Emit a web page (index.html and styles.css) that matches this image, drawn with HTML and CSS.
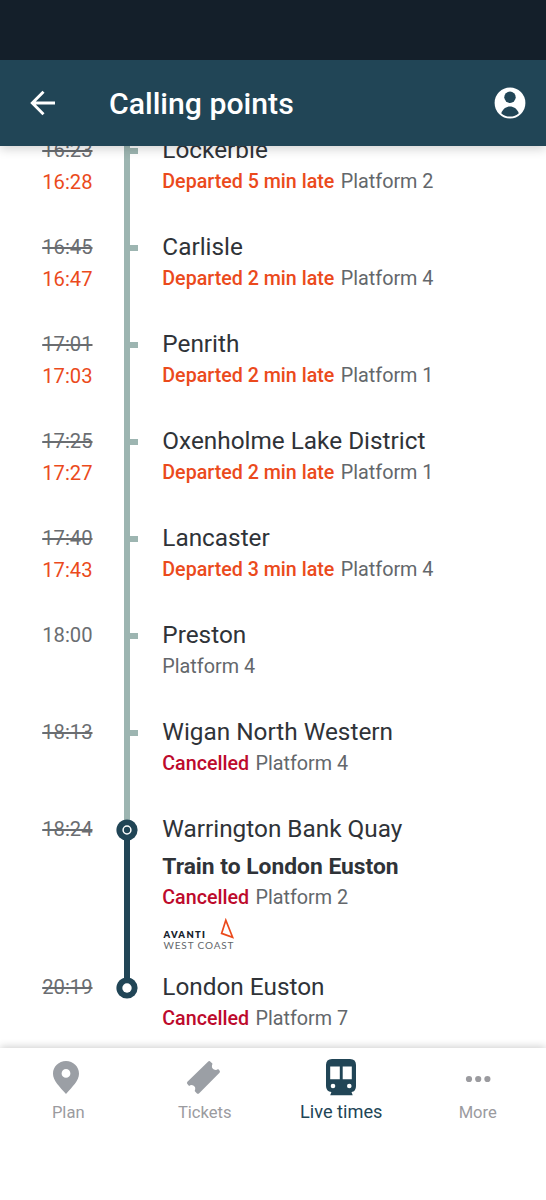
FILE: index.html
```html
<!DOCTYPE html>
<html lang="en">
<head>
    <meta charset="UTF-8">
    <meta name="viewport" content="width=device-width, initial-scale=1.0">
    <title>Calling points</title>
    <link rel="stylesheet" href="styles.css">
</head>
<body>

<div class="status-bar"></div>

<header class="header">
    <svg class="back" viewBox="0 0 26 26" fill="none" stroke="#fff" stroke-width="2.9">
        <path d="M25 13H2.5M13.5 1.8L2.3 13l11.2 11.2"/>
    </svg>
    <h1>Calling points</h1>
    <svg class="account" viewBox="0 0 32 32">
        <circle cx="16" cy="16" r="15.4" fill="#fff"/>
        <circle cx="16" cy="10.3" r="5.7" fill="#214556"/>
        <path d="M7.2 26.2C9.2 21.6 12.3 19.6 16 19.6s6.8 2 8.8 6.6C22.5 28.6 19.5 29.6 16 29.6s-6.5-1-8.8-3.4z" fill="#214556"/>
    </svg>
</header>

<main class="stops">
    <div class="stop">
        <div class="time"><s>16:23</s><span class="late">16:28</span></div>
        <div class="rail"></div>
        <div class="info">
            <h2>Lockerbie</h2>
            <p><b class="late">Departed 5 min late</b> Platform 2</p>
        </div>
    </div>
    <div class="stop">
        <div class="time"><s>16:45</s><span class="late">16:47</span></div>
        <div class="rail"></div>
        <div class="info">
            <h2>Carlisle</h2>
            <p><b class="late">Departed 2 min late</b> Platform 4</p>
        </div>
    </div>
    <div class="stop">
        <div class="time"><s>17:01</s><span class="late">17:03</span></div>
        <div class="rail"></div>
        <div class="info">
            <h2>Penrith</h2>
            <p><b class="late">Departed 2 min late</b> Platform 1</p>
        </div>
    </div>
    <div class="stop">
        <div class="time"><s>17:25</s><span class="late">17:27</span></div>
        <div class="rail"></div>
        <div class="info">
            <h2>Oxenholme Lake District</h2>
            <p><b class="late">Departed 2 min late</b> Platform 1</p>
        </div>
    </div>
    <div class="stop">
        <div class="time"><s>17:40</s><span class="late">17:43</span></div>
        <div class="rail"></div>
        <div class="info">
            <h2>Lancaster</h2>
            <p><b class="late">Departed 3 min late</b> Platform 4</p>
        </div>
    </div>
    <div class="stop">
        <div class="time"><span>18:00</span></div>
        <div class="rail"></div>
        <div class="info">
            <h2>Preston</h2>
            <p>Platform 4</p>
        </div>
    </div>
    <div class="stop">
        <div class="time"><s>18:13</s></div>
        <div class="rail"></div>
        <div class="info">
            <h2>Wigan North Western</h2>
            <p><b class="cancelled">Cancelled</b> Platform 4</p>
        </div>
    </div>
    <div class="stop origin">
        <div class="time"><s>18:24</s></div>
        <div class="rail">
            <svg class="marker" viewBox="0 0 22 22">
                <circle cx="11" cy="11" r="10.6" fill="#214556"/>
                <circle cx="11" cy="11" r="3.9" fill="none" stroke="#fff" stroke-width="1.5"/>
            </svg>
        </div>
        <div class="info">
            <h2>Warrington Bank Quay</h2>
            <h3>Train to London Euston</h3>
            <p><b class="cancelled">Cancelled</b> Platform 2</p>
            <svg class="operator" viewBox="0 0 72 32">
                <text class="avanti" x="0.5" y="20.2" textLength="41.5">AVANTI</text>
                <text class="west-coast" x="0.5" y="30.6" textLength="70">WEST COAST</text>
                <path d="M62.8 2.2L58.6 15.4l11 3.9z" fill="none" stroke="#eb4a1c" stroke-width="1.7"/>
            </svg>
        </div>
    </div>
    <div class="stop last">
        <div class="time"><s>20:19</s></div>
        <div class="rail">
            <svg class="marker" viewBox="0 0 22 22">
                <circle cx="11" cy="11" r="10.6" fill="#214556"/>
                <circle cx="11" cy="11" r="4.7" fill="#fff"/>
            </svg>
        </div>
        <div class="info">
            <h2>London Euston</h2>
            <p><b class="cancelled">Cancelled</b> Platform 7</p>
        </div>
    </div>
</main>

<nav class="tabs">
    <a class="tab">
        <svg viewBox="0 0 40 40" fill="#9b9fa5">
            <path fill-rule="evenodd" d="M18 4C10.8 4 5 9.6 5 16.7 5 23.5 11.5 29.5 18 37c6.5-7.5 13-13.5 13-20.3C31 9.6 25.2 4 18 4zm0 8a4.4 4.4 0 1 1 0 8.8 4.4 4.4 0 0 1 0-8.8z"/>
        </svg>
        <span>Plan</span>
    </a>
    <a class="tab">
        <svg viewBox="3.5 0 40 40" fill="#9b9fa5">
            <path d="M26.5 4.700q1.300-1.200 2.500 0l2 2q-1.600 4 1 5.500t4.600-.3l1.400 1.600q1 1.200 0 2.300L17.700 36.200q-1.300 1.200-2.500 0l-2-2.100q1.500-3.800-1-5.300t-4.600.2l-1.700-1.900q-1-1.200 0-2.300z"/>
        </svg>
        <span>Tickets</span>
    </a>
    <a class="tab active">
        <svg viewBox="0 0 40 40">
            <path fill="#214556" d="M11 2h18q6 0 6 6v21q0 5.500-4.500 6l1.200 3.300h-22.500l1.200-3.300Q5 34.500 5 29V8q0-6 6-6z"/>
            <path fill="#fff" d="M9.200 9.500h9.600v12.800H9.200zM21.700 9.500h9.100v12.800h-9.100z"/>
            <circle cx="12" cy="29" r="2.3" fill="#fff"/>
            <circle cx="28.3" cy="29" r="2.3" fill="#fff"/>
        </svg>
        <span>Live times</span>
    </a>
    <a class="tab">
        <svg viewBox="0 0 40 40" fill="#9b9b9f">
            <circle cx="11" cy="22" r="3.1"/>
            <circle cx="20.2" cy="22" r="3.1"/>
            <circle cx="29.4" cy="22" r="3.1"/>
        </svg>
        <span>More</span>
    </a>
</nav>

</body>
</html>
```
FILE: styles.css
```css
* {
    box-sizing: border-box;
}

body {
    margin: 0;
    height: 1200px;
    display: flex;
    flex-direction: column;
    overflow: hidden;
    font-family: Roboto, sans-serif;
    background: #fff;
    color: #2f3338;
}

h1, h2, h3, p {
    margin: 0;
}

.status-bar {
    flex: none;
    height: 60px;
    background: #141f2a;
    z-index: 2;
}

.header {
    flex: none;
    height: 86px;
    display: flex;
    align-items: center;
    padding: 0 20px 0 30px;
    background: #214556;
    color: #fff;
    box-shadow: 0 3px 10px rgba(0, 0, 0, 0.18);
    z-index: 1;
}

.header h1 {
    flex: 1;
    margin-left: 53px;
    font-size: 30.2px;
    font-weight: 500;
}

.back {
    width: 26px;
    height: 26px;
}

.account {
    width: 32px;
    height: 32px;
}

.stops {
    flex: none;
    height: 902px;
    overflow: hidden;
}

.stop {
    display: flex;
    height: 97px;
}

.stop:first-child {
    margin-top: -12px;
}

.stop.origin {
    height: 158px;
}

.time {
    width: 124px;
    padding-right: 31.5px;
    text-align: right;
    font-size: 20.2px;
    font-weight: 450;
    color: #6a6d71;
}

.time s, .time span {
    display: block;
    line-height: 32px;
}

.time s {
    text-decoration-thickness: 1.5px;
}

.time .late, .late {
    color: #eb4a1c;
}

.cancelled {
    color: #bd0a2c;
}

/* the line runs past the row, the tick sits level with the station name */
.rail {
    width: 14px;
    background:
        linear-gradient(#9db5b1, #9db5b1) 0 14px / 14px 6px no-repeat,
        linear-gradient(#9db5b1, #9db5b1) 0 0 / 6px 100% no-repeat;
}

.origin .rail {
    background:
        linear-gradient(#9db5b1, #9db5b1) 0 0 / 6px 16px no-repeat,
        linear-gradient(#214556, #214556) 0 16px / 6px 100% no-repeat;
}

.last .rail {
    background: linear-gradient(#214556, #214556) 0 0 / 6px 16px no-repeat;
}

.marker {
    display: block;
    width: 22px;
    height: 22px;
    margin: 6px 0 0 -7.7px;
}

.info {
    margin-left: 24.3px;
    white-space: nowrap;
}

.info h2 {
    font-size: 24.35px;
    line-height: 32px;
    font-weight: 400;
}

.info h3 {
    padding-top: 7px;
    font-size: 22.8px;
    line-height: 30px;
    font-weight: 700;
}

.info p {
    padding-top: 1px;
    font-size: 19.8px;
    line-height: 30px;
    color: #63676b;
}

.info b {
    margin-right: 1.5px;
    font-size: 19.65px;
    font-weight: 500;
}

.operator {
    display: block;
    width: 72px;
    height: 32px;
    margin-top: 5px;
    margin-left: 1px;
}

.avanti {
    font: 800 9.4px Lato, sans-serif;
    fill: #17232d;
}

.west-coast {
    font: 400 10px Lato, sans-serif;
    fill: #63676b;
}

.tabs {
    flex: 1;
    display: flex;
    padding-top: 9px;
    background: #fff;
    box-shadow: 0 -1px 8px rgba(0, 0, 0, 0.2);
    z-index: 1;
}

.tab {
    width: 25%;
    display: flex;
    flex-direction: column;
    align-items: center;
    font-size: 16.6px;
    line-height: 24px;
    color: #9b9b9f;
}

.tab svg {
    width: 40px;
    height: 40px;
    margin-bottom: 4px;
}

.tab.active {
    font-size: 18.2px;
    color: #214556;
}

.tab.active svg {
    margin-bottom: 3px;
}
```
